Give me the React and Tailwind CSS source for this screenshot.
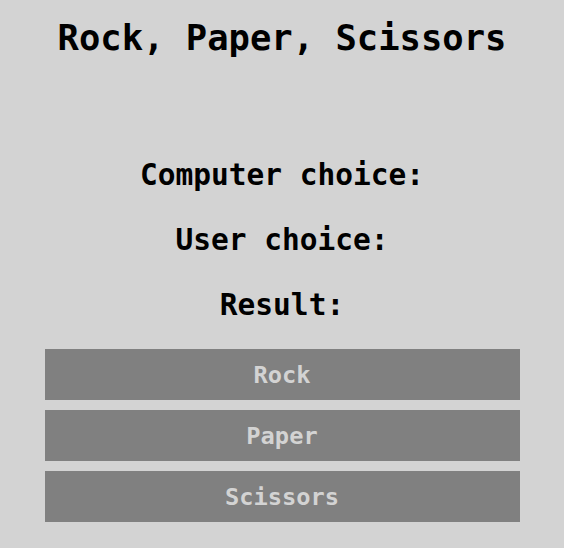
import React, { useState } from 'react';

const choices = ['Rock', 'Paper', 'Scissors'];

const App = () => {
	const [computerChoice, setComputerChoice] = useState('');
	const [userChoice, setUserChoice] = useState('');
	const [result, setResult] = useState('');

	const play = (choice) => {
		const comp = choices[Math.floor(Math.random() * choices.length)];
		setUserChoice(choice);
		setComputerChoice(comp);
		if (comp === choice) {
			setResult("It's a draw!");
		} else if (
			(choice === 'Rock' && comp === 'Scissors') ||
			(choice === 'Paper' && comp === 'Rock') ||
			(choice === 'Scissors' && comp === 'Paper')
		) {
			setResult('You win!');
		} else {
			setResult('You lose!');
		}
	};

	return (
		<div className="w-full min-h-[548px] bg-[#d3d3d3] text-black font-['DejaVu_Sans_Mono',monospace] font-bold flex flex-col items-center">
			<h1 className="text-[35.5px] leading-[75px] text-center">
				Rock, Paper, Scissors
			</h1>
			<div className="mt-[68px] flex flex-col items-center">
				<h2 className="text-[29.5px] leading-[65px]">
					Computer choice:{computerChoice && ` ${computerChoice}`}
				</h2>
				<h2 className="text-[29.5px] leading-[65px]">
					User choice:{userChoice && ` ${userChoice}`}
				</h2>
				<h2 className="text-[29.5px] leading-[65px]">
					Result:{result && ` ${result}`}
				</h2>
			</div>
			<div className="mt-[11px] w-[475px] flex flex-col gap-[10px]">
				{choices.map((choice) => (
					<button
						key={choice}
						onClick={() => play(choice)}
						className="h-[51px] w-full pt-[3px] bg-[#808080] text-[#d3d3d3] text-[23.7px] font-bold cursor-pointer"
					>
						{choice}
					</button>
				))}
			</div>
		</div>
	);
};

export default App;
